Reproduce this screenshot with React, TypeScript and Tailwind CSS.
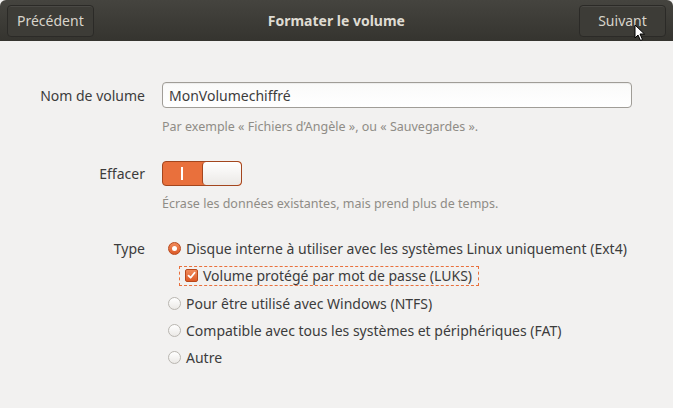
import React from "react";

const font = { fontFamily: '"Noto Sans", "Open Sans", sans-serif' };

function Radio({ checked }: { checked?: boolean }) {
  return checked ? (
    <span className="flex h-[13px] w-[13px] items-center justify-center rounded-full border border-[#b8481c] bg-gradient-to-b from-[#f08a5a] to-[#dd5a26]">
      <span className="h-[5px] w-[5px] rounded-full bg-white" />
    </span>
  ) : (
    <span className="h-[13px] w-[13px] rounded-full border border-[#b9b6b0] bg-gradient-to-b from-white to-[#ebe9e6]" />
  );
}

function Check() {
  return (
    <span className="flex h-[13px] w-[13px] items-center justify-center rounded-[2px] border border-[#b8481c] bg-gradient-to-b from-[#f08a5a] to-[#dd5a26]">
      <svg width="9" height="9" viewBox="0 0 9 9" fill="none">
        <path d="M1.5 4.6L3.6 6.7L7.6 1.8" stroke="white" strokeWidth="1.8" strokeLinecap="round" strokeLinejoin="round" />
      </svg>
    </span>
  );
}

export default function App() {
  return (
    <div className="h-[408px] w-[673px] overflow-hidden bg-[#f2f1f0] text-[14px] text-[#3c3c3c]" style={font}>
      {/* header bar */}
      <div className="flex h-[41px] items-center justify-between rounded-t-[6px] bg-gradient-to-b from-[#45443f] to-[#35342f] px-[7px]">
        <button className="h-[32px] rounded-[4px] border border-[#2b2a27] bg-[#3d3c37] px-[9px] text-[14px] text-[#d8d4cb] shadow-[inset_0_1px_0_rgba(255,255,255,0.07)]">
          Précédent
        </button>
        <span className="text-[14px] font-bold text-[#dfdbd2]">Formater le volume</span>
        <button className="relative h-[32px] w-[87px] rounded-[4px] border border-[#2b2a27] bg-[#3d3c37] text-[14px] text-[#d8d4cb] shadow-[inset_0_1px_0_rgba(255,255,255,0.07)]">
          Suivant
          <svg className="absolute left-[54px] top-[18px]" width="12" height="18" viewBox="0 0 12 18">
            <path d="M1 1L1 14L4 11L6.5 16.5L8.5 15.5L6 10L10.5 10Z" fill="white" stroke="black" strokeWidth="1" strokeLinejoin="round" />
          </svg>
        </button>
      </div>

      {/* form */}
      <div className="grid grid-cols-[145px_1fr] gap-x-[17px] pr-[41px] pt-[41px] whitespace-nowrap">
        <div className="flex h-[26px] items-center justify-end">Nom de volume</div>
        <div>
          <div className="flex h-[26px] items-center rounded-[4px] border border-[#a09d97] bg-gradient-to-b from-[#fafaf9] to-white px-[6px] shadow-[inset_0_1px_1px_rgba(0,0,0,0.06)]">
            MonVolumechiffré
          </div>
          <div className="mt-[10px] text-[12.5px] text-[#8f8c86]">
            Par exemple « Fichiers d’Angèle », ou « Sauvegardes ».
          </div>
        </div>

        <div className="mt-[24px] flex h-[25px] items-center justify-end">Effacer</div>
        <div className="mt-[24px]">
          <div className="flex h-[25px] w-[80px] overflow-hidden rounded-[4px] border border-[#a3461e] bg-[#e9703c]">
            <div className="flex w-[40px] items-center justify-center">
              <span className="h-[13px] w-[2px] bg-white" />
            </div>
            <div className="w-[40px] rounded-[4px] border-l border-[#a3461e] bg-gradient-to-b from-white to-[#ebe9e6]" />
          </div>
          <div className="mt-[9px] text-[12.5px] text-[#8f8c86]">
            Écrase les données existantes, mais prend plus de temps.
          </div>
        </div>

        <div className="mt-[26px] flex h-[18px] items-center justify-end">Type</div>
        <div className="mt-[26px] flex flex-col">
          <div className="flex h-[18px] items-center gap-[5px] pl-[6px]">
            <Radio checked />
            <span>Disque interne à utiliser avec les systèmes Linux uniquement (Ext4)</span>
          </div>
          <div className="mt-[8px] ml-[17px] flex h-[20px] w-fit items-center gap-[5px] border border-dashed border-[#e9703c] pl-[5px] pr-[6px]">
            <Check />
            <span>Volume protégé par mot de passe (LUKS)</span>
          </div>
          <div className="mt-[9px] flex h-[18px] items-center gap-[5px] pl-[6px]">
            <Radio />
            <span>Pour être utilisé avec Windows (NTFS)</span>
          </div>
          <div className="mt-[9px] flex h-[18px] items-center gap-[5px] pl-[6px]">
            <Radio />
            <span>Compatible avec tous les systèmes et périphériques (FAT)</span>
          </div>
          <div className="mt-[9px] flex h-[18px] items-center gap-[5px] pl-[6px]">
            <Radio />
            <span>Autre</span>
          </div>
        </div>
      </div>
    </div>
  );
}
